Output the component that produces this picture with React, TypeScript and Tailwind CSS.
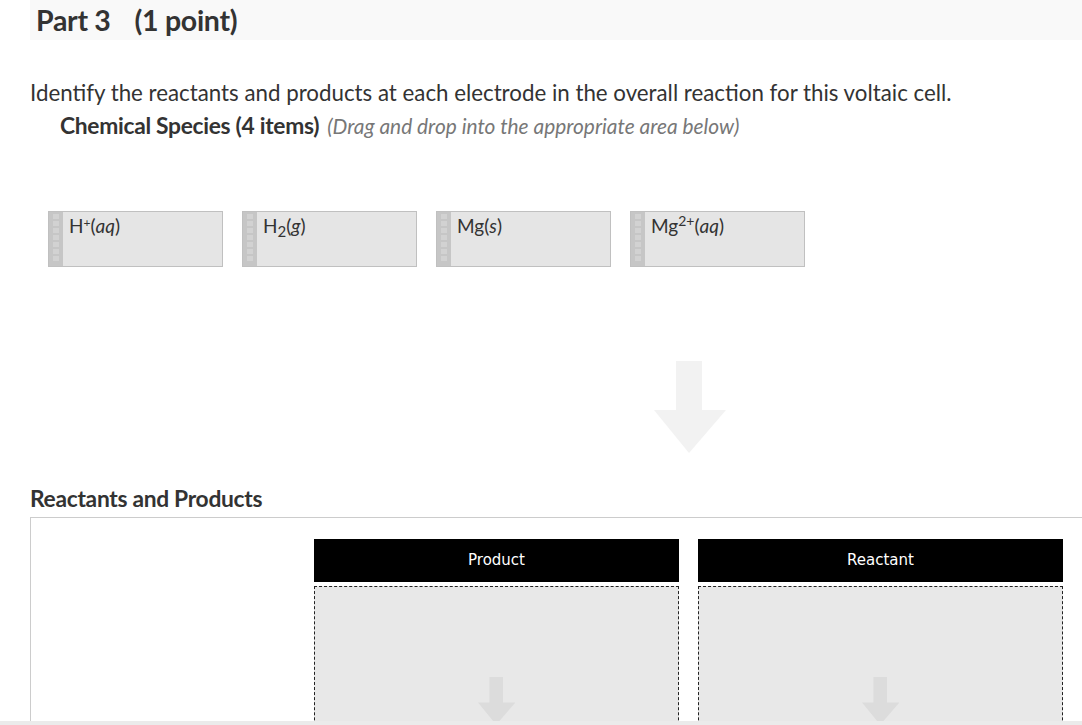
const items = [
  { id: "h", label: <>H<sup className="text-[12px]">+</sup>(<i>aq</i>)</> },
  { id: "h2", label: <>H<sub className="text-[15px]">2</sub>(<i>g</i>)</> },
  { id: "mg", label: <>Mg(<i>s</i>)</> },
  { id: "mg2", label: <>Mg<sup className="text-[14px]">2+</sup>(<i>aq</i>)</> },
];

function DragCard({ children }: { children: React.ReactNode }) {
  return (
    <div className="flex h-[56px] w-[175px] border border-[#c0c0c0] bg-[#e5e5e5]">
      <div className="flex w-[14px] shrink-0 flex-col items-center gap-[2px] overflow-hidden bg-[#c6c6c6] pt-[2px]">
        {Array.from({ length: 7 }).map((_, i) => (
          <span key={i} className="block h-[5px] w-[6px] bg-[#d2d2d2]" />
        ))}
      </div>
      <div className="pl-[6px] pt-[1px] text-[19px] leading-[26px] text-[#333]">{children}</div>
    </div>
  );
}

function DownArrow({ color, size }: { color: string; size: number }) {
  return (
    <svg width={size * 72} height={size * 92} viewBox="0 0 72 92">
      <path d="M22 0 H48 V49 H72 L35 92 L0 49 H22 Z" fill={color} />
    </svg>
  );
}

function Column({ title }: { title: string }) {
  return (
    <div className="flex w-[365px] flex-col gap-[4px]">
      <div className="flex h-[43px] items-center justify-center bg-black font-['DejaVu_Sans',sans-serif] text-[15px] text-white">
        {title}
      </div>
      <div className="flex h-[200px] justify-center border border-dashed border-[#222] bg-[#e8e8e8] pt-[90px]">
        <DownArrow color="#dcdcdc" size={0.52} />
      </div>
    </div>
  );
}

export default function App() {
  return (
    <div className="relative h-[725px] w-[1082px] overflow-hidden bg-white font-['Lato',sans-serif] text-[#333]">
      <div className="ml-[30px] flex h-[40px] items-center bg-[#f9f9f9] pl-[6px] text-[28.5px] font-bold tracking-[-0.3px] text-[#333]">
        <span>Part 3</span>
        <span className="ml-[24px]">(1 point)</span>
      </div>

      <p className="ml-[30px] mt-[38px] text-[22.3px] leading-[30px]">
        Identify the reactants and products at each electrode in the overall reaction for this voltaic cell.
      </p>
      <div className="ml-[60px] mt-[2px] flex items-baseline gap-[8px] leading-[30px]">
        <span className="text-[22.8px] font-bold tracking-[-0.3px]">Chemical Species (4 items)</span>
        <span className="text-[20.9px] italic text-[#777]">(Drag and drop into the appropriate area below)</span>
      </div>

      <div className="ml-[48px] mt-[70px] flex gap-[19px]">
        {items.map((it) => (
          <DragCard key={it.id}>{it.label}</DragCard>
        ))}
      </div>

      <div className="ml-[654px] mt-[94px]">
        <DownArrow color="#f2f2f2" size={1} />
      </div>

      <h2 className="ml-[30px] mt-[30px] text-[22.8px] font-bold leading-[30px] tracking-[-0.3px]">
        Reactants and Products
      </h2>

      <div className="ml-[30px] mt-[4px] w-[1080px] border border-[#cccccc] pl-[283px] pt-[21px]">
        <div className="flex gap-[19px]">
          <Column title="Product" />
          <Column title="Reactant" />
        </div>
      </div>

      <div className="absolute bottom-0 left-0 h-[4px] w-full bg-[#ebebeb]" />
    </div>
  );
}
